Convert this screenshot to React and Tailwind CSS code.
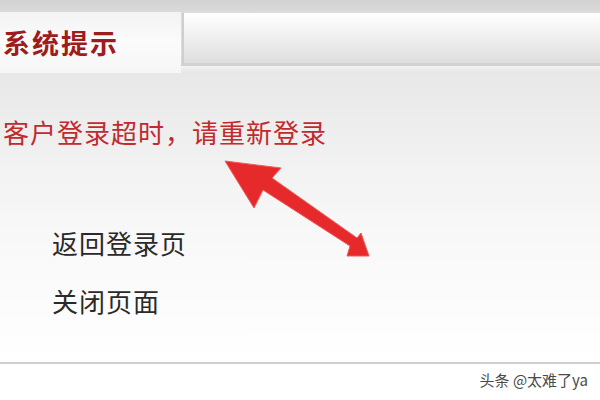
import React from 'react';

const cjk = { fontFamily: '"Noto Sans CJK SC", "Noto Sans", sans-serif' };

function Arrow() {
  return (
    <svg className="absolute left-0 top-0" width="600" height="400" viewBox="0 0 600 400">
      <polygon
        points="225,161 281,168 272,178 357,238 361,233 369,256 347,256 350,246 263,190 254,208"
        fill="#e62a2c"
        stroke="#ef5a5a"
        strokeWidth="1"
        strokeLinejoin="round"
      />
    </svg>
  );
}

export default function App() {
  return (
    <div className="relative w-[600px] h-[400px] overflow-hidden bg-white" style={cjk}>
      {/* top band */}
      <div className="h-[12px] bg-gradient-to-b from-[#d2d2d2] to-[#dadada]" />

      {/* header row */}
      <div className="flex h-[61px]">
        <div className="w-[181px] flex items-center pl-[3px] bg-gradient-to-b from-[#f3f3f3] via-[#fbfbfb] to-[#f6f6f6]">
          <span className="text-[27px] font-bold text-[#9e1c1c] leading-none tracking-[2px]">系统提示</span>
        </div>
        <div className="flex-1 flex flex-col bg-[#dcdcdc]">
          <div className="h-[50px] mt-[1px] ml-[1px] border-l-2 border-[#cfcfcf] bg-gradient-to-b from-[#ffffff] via-[#efefef] to-[#dedede]" />
          <div className="h-[3px] bg-[#d2d2d2]" />
          <div className="flex-1 bg-gradient-to-b from-[#f3f3f3] to-[#e6e6e6]" />
        </div>
      </div>

      {/* content */}
      <div className="h-[289px] flex flex-col bg-gradient-to-b from-[#e8e8e8] via-[#f7f7f7] to-[#ffffff]">
        <div className="mt-[45px] pl-[3px] text-[26px] leading-[28px] text-[#c22a2e] tracking-[1px]">
          客户登录超时，请重新登录
        </div>
        <div className="mt-[83px] pl-[52px] text-[26px] leading-[28px] text-[#2a2a2a] tracking-[1px]">返回登录页</div>
        <div className="mt-[30px] pl-[52px] text-[26px] leading-[28px] text-[#2a2a2a] tracking-[1px]">关闭页面</div>
      </div>

      <div className="h-[2px] bg-[#cfcfcf]" />

      <div className="flex justify-end pr-[12px] pt-[7px]">
        <span className="text-[15px] leading-[18px] text-[#4a4a4a]">头条 @太难了ya</span>
      </div>

      <Arrow />
    </div>
  );
}
